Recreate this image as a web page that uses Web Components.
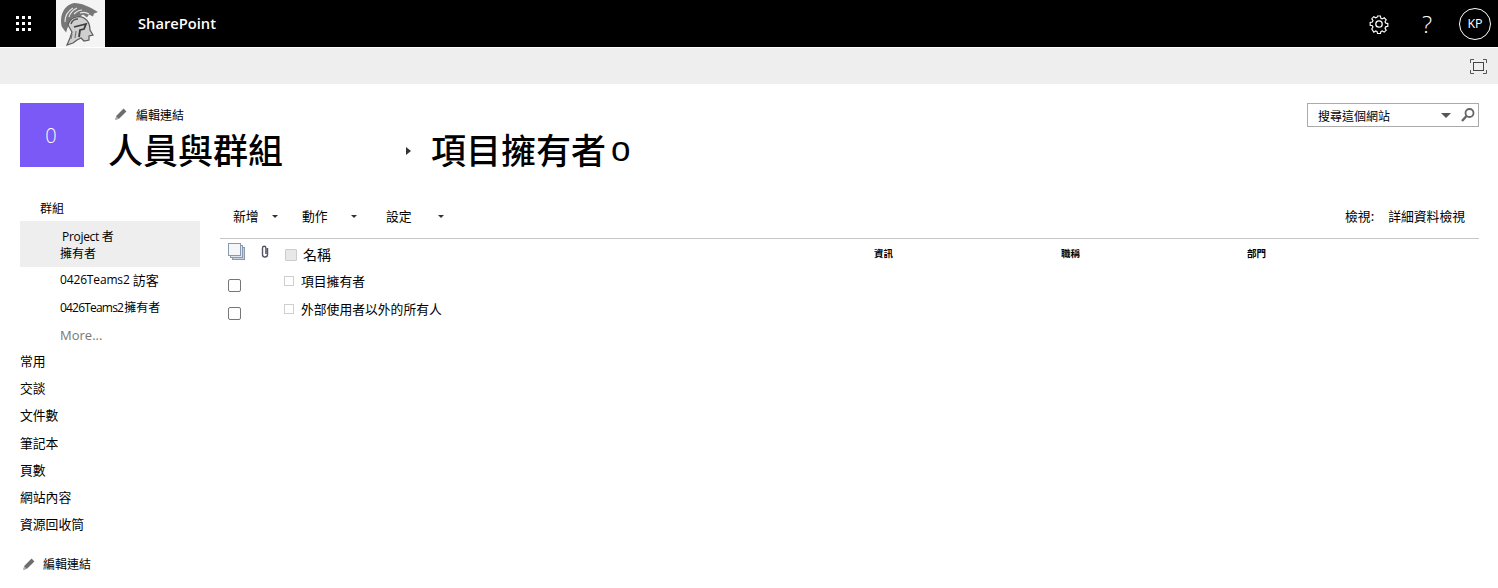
<!DOCTYPE html>
<html lang="zh-Hant">
<head>
<meta charset="utf-8">
<title>人員與群組</title>
<style>
  html, body { margin: 0; padding: 0; background: #fff; }
  body { font-family: "Open Sans", "Noto Sans CJK TC", sans-serif; color: #000; overflow: hidden; height: 588px; }
</style>
</head>
<body>
<sp-suitebar></sp-suitebar>
<sp-ribbon></sp-ribbon>
<sp-title-row></sp-title-row>
<sp-workspace>
  <sp-quicklaunch slot="nav"></sp-quicklaunch>
  <sp-people-list slot="main"></sp-people-list>
</sp-workspace>

<script>
const CJK = '"Noto Sans CJK TC", sans-serif';
const pencil = `<svg width="14" height="14" viewBox="0 0 14 14"><path d="M9.600 1.600 12.400 4.400 5 11.800 1.400 12.800 2.200 9z" fill="#6d6d6d"/><path d="M2.200 9 5 11.800 1.400 12.800z" fill="#a8a8a8"/></svg>`;

class SpSuitebar extends HTMLElement {
  constructor() {
    super();
    this.attachShadow({ mode: 'open' });
    let dots = '';
    for (let y = 0; y < 3; y++) {
      for (let x = 0; x < 3; x++) dots += `<rect x="${x * 6}" y="${y * 6}" width="3" height="3"/>`;
    }
    this.shadowRoot.innerHTML = `
      <style>
        :host { display: flex; align-items: center; height: 47px; background: #000; color: #fff; margin-bottom: 1px; }
        .waffle { width: 47px; height: 47px; display: flex; align-items: center; justify-content: center; flex: none; }
        .logo { width: 49px; height: 47px; background: #f4f4f4; margin-left: 9px; flex: none; }
        .logo svg { display: block; }
        .brand { margin-left: 33px; font: 600 14.700px "Open Sans", sans-serif; flex: 1; padding-bottom: 2px; }
        .btn { width: 48px; height: 47px; display: flex; align-items: center; justify-content: center; flex: none; }
        .me { width: 32px; height: 32px; box-sizing: border-box; border: 1px solid #fff; border-radius: 50%; font: 400 12.500px "Open Sans", sans-serif; display: flex; align-items: center; justify-content: center; margin: 0 7px 0 8px; flex: none; }
      </style>
      <div class="waffle"><svg width="15" height="15" fill="#fff">${dots}</svg></div>
      <div class="logo">
        <svg width="49" height="47" viewBox="0 0 49 47">
          <path d="M6 27C3 16 8 5 18 3c8 0 16 4 24 9l-4 1.500-1 3-4-2-2 3-4-3-3 2c-7-1-11 3-12 10l-2 6z" fill="#777"/>
          <path d="M9 22c0-6 3-11 8-14M13 17c1-4 4-7 8-9M18 14c2-2 5-4 8-4M24 13c3-1 6-1 9 1" fill="none" stroke="#e8e8e8" stroke-width="1.100"/>
          <path d="M12 25c2-8 10-10 16-7 5 3 6 8 6 12l3 5-4 1v4l-5 1-3-3-4 2-4 3-6 2 3-7 2-6z" fill="#cfcfcf" stroke="#5a5a5a" stroke-width="1.200"/>
          <path d="M18 27l12-3-2 5-4 1-1 7" fill="none" stroke="#3c3c3c" stroke-width="1.800"/>
          <path d="M15 24c1-3 4-5 7-5" fill="none" stroke="#555" stroke-width="1.500"/>
          <path d="M16 34l-1 5M20 31l-1 7" stroke="#777" stroke-width="1.200"/>
        </svg>
      </div>
      <div class="brand">SharePoint</div>
      <div class="btn"><svg width="20" height="20" viewBox="0 0 20 20" fill="none" stroke="#fff" stroke-width="1.300"><path d="M8.400 1.800h3.200l.5 2.500 1.500.7 2.200-1.300 2.200 2.300-1.300 2.100.7 1.500 2.400.6v3l-2.400.6-.7 1.500 1.300 2.200-2.200 2.200-2.200-1.300-1.500.7-.5 2.300H8.400l-.5-2.300-1.500-.7-2.200 1.300L2 16.300l1.300-2.200-.7-1.500-2.400-.6V9l2.400-.6.7-1.500L2 4.800 4.200 2.500l2.200 1.300 1.500-.7z" transform="translate(1 .4) scale(.9)"/><circle cx="10" cy="10" r="3.200"/></svg></div>
      <div class="btn"><span style="font:300 24px 'Open Sans',sans-serif">?</span></div>
      <div class="me">KP</div>
    `;
  }
}
customElements.define('sp-suitebar', SpSuitebar);

class SpRibbon extends HTMLElement {
  constructor() {
    super();
    this.attachShadow({ mode: 'open' });
    this.shadowRoot.innerHTML = `
      <style>
        :host { display: flex; justify-content: flex-end; align-items: center; height: 36px; background: #eeeeee; padding-right: 11px; }
      </style>
      <svg width="17" height="15" viewBox="0 0 17 15" fill="none" stroke="#555" stroke-width="1">
        <path d="M.5 4V.5H4M13 .5h3.500V4M16.500 11v3.500H13M4 14.500H.5V11"/>
        <rect x="3.500" y="3.500" width="10" height="8" stroke="#444"/>
      </svg>
    `;
  }
}
customElements.define('sp-ribbon', SpRibbon);

class SpTitleRow extends HTMLElement {
  constructor() {
    super();
    this.attachShadow({ mode: 'open' });
    this.shadowRoot.innerHTML = `
      <style>
        :host { display: flex; height: 113px; padding: 19px 19px 0 20px; box-sizing: border-box; font-family: ${CJK}; }
        .tile { width: 64px; height: 64px; background: #7a59f6; color: #fff; display: flex; align-items: center; justify-content: center; font: 300 20px "Open Sans", sans-serif; flex: none; padding-right: 2px; box-sizing: border-box; }
        .heading { margin-left: 24px; flex: 1; }
        .edit { display: flex; align-items: center; height: 22px; font-size: 12px; margin-left: 6px; gap: 8px; }
        .crumbs { display: flex; align-items: center; height: 44px; margin-top: 2px; font-size: 35px; line-height: 44px; white-space: nowrap; font-weight: 500; }
        .crumbs b { font: 400 35px "Liberation Sans", sans-serif; margin-left: 5px; }
        .arrow { width: 0; height: 0; border-left: 5px solid #333; border-top: 4.500px solid transparent; border-bottom: 4.500px solid transparent; margin: 4px 20px 0 123px; }
        .search { width: 172px; height: 24px; box-sizing: border-box; border: 1px solid #ababab; display: flex; align-items: center; font-size: 12px; padding-left: 10px; flex: none; }
        .search span { flex: 1; padding-top: 1px; }
        .drop { width: 0; height: 0; border-top: 5px solid #555; border-left: 5px solid transparent; border-right: 5px solid transparent; margin-right: 9px; }
        .lens { margin-right: 2px; display: block; }
      </style>
      <div class="tile">0</div>
      <div class="heading">
        <div class="edit">${pencil}<span>編輯連結</span></div>
        <div class="crumbs"><span>人員與群組</span><i class="arrow"></i><span>項目擁有者</span><b>o</b></div>
      </div>
      <div class="search">
        <span>搜尋這個網站</span><i class="drop"></i>
        <svg class="lens" width="16" height="16" viewBox="0 0 16 16" fill="none" stroke="#666"><circle cx="9.500" cy="6" r="4" stroke-width="1.800"/><path d="M6.500 9 2 14" stroke-width="2.400"/></svg>
      </div>
    `;
  }
}
customElements.define('sp-title-row', SpTitleRow);

class SpWorkspace extends HTMLElement {
  constructor() {
    super();
    this.attachShadow({ mode: 'open' });
    this.shadowRoot.innerHTML = `
      <style>
        :host { display: flex; padding-left: 20px; padding-right: 19px; }
        ::slotted([slot=nav]) { width: 180px; flex: none; }
        ::slotted([slot=main]) { flex: 1; margin-left: 20px; }
      </style>
      <slot name="nav"></slot>
      <slot name="main"></slot>
    `;
  }
}
customElements.define('sp-workspace', SpWorkspace);

class SpQuicklaunch extends HTMLElement {
  constructor() {
    super();
    this.attachShadow({ mode: 'open' });
    const top = ['常用', '交談', '文件數', '筆記本', '頁數', '網站內容', '資源回收筒'];
    this.shadowRoot.innerHTML = `
      <style>
        :host { display: block; font-family: "Open Sans", ${CJK}; font-size: 12px; color: #000; }
        .group { height: 25px; box-sizing: border-box; padding: 0 0 2px 20px; margin-top: -1px; display: flex; align-items: center; }
        .selected { background: #eeeeee; height: 46px; box-sizing: border-box; padding: 7px 0 0 40px; line-height: 17px; }
        .selected span { display: block; }
        .selected .first { padding-left: 2px; letter-spacing: -.3px; }
        .sub { height: 27.500px; box-sizing: border-box; padding: 0 0 2px 40px; display: flex; align-items: center; white-space: nowrap; font-size: 13px; }
        .sub span { font-size: 12px; }
        .a span { letter-spacing: -.15px; margin-right: 3px; }
        .b { font-size: 12px; }
        .b span { letter-spacing: -.8px; margin-right: 1px; }
        .more { color: #777; font-size: 13px; }
        .tops { margin-top: -2px; font-size: 12.800px; }
        .top { height: 27.300px; box-sizing: border-box; padding-bottom: 2px; display: flex; align-items: center; }
        .edit { display: flex; align-items: center; gap: 7px; margin-top: 12px; height: 26px; padding-left: 2px; }
      </style>
      <div class="group">群組</div>
      <div class="selected"><span class="first">Project 者</span><span>擁有者</span></div>
      <div class="sub a"><span>0426Teams2</span>訪客</div>
      <div class="sub b"><span>0426Teams2</span>擁有者</div>
      <div class="sub more">More...</div>
      <div class="tops">${top.map(t => `<div class="top">${t}</div>`).join('')}</div>
      <div class="edit">${pencil}<span>編輯連結</span></div>
    `;
  }
}
customElements.define('sp-quicklaunch', SpQuicklaunch);

class SpPeopleList extends HTMLElement {
  constructor() {
    super();
    this.attachShadow({ mode: 'open' });
    const rows = ['項目擁有者', '外部使用者以外的所有人'];
    this.shadowRoot.innerHTML = `
      <style>
        :host { display: block; font-family: ${CJK}; font-size: 12.800px; margin-top: -3px; }
        .toolbar { display: flex; align-items: center; height: 42px; padding: 0 0 2px 13px; border-bottom: 1px solid #c6c6c6; }
        .menu { display: flex; align-items: center; }
        .caret { width: 0; height: 0; border-top: 3px solid #333; border-left: 3px solid transparent; border-right: 3px solid transparent; margin-top: 3px; }
        .views { margin-left: auto; display: flex; gap: 14px; padding-right: 14px; }
        .head { display: grid; grid-template-columns: 33px 32px 589px 187px 186px 1fr; height: 29px; align-items: center; }
        .small { font-size: 9.500px; font-weight: 700; margin-top: -2px; }
        .row { display: grid; grid-template-columns: 64px 1fr; height: 28px; align-items: center; }
        .box { border: 1px solid #767676; border-radius: 2px; margin: 6px 0 0 8px; box-sizing: border-box; width: 13px; height: 13px; background: #fff; }
        .name { display: flex; align-items: center; gap: 7px; margin-top: -2px; }
        .name span { margin-top: -2px; }
        .tick { width: 10px; height: 10px; border: 1px solid #cfcfcf; box-sizing: border-box; flex: none; }
        .headname { display: flex; align-items: center; font-size: 14px; gap: 6px; margin-top: 2px; }
        .headname span { margin-top: -2px; }
        .headtick { width: 12px; height: 12px; background: #e8e8e8; border: 1px solid #ccc; box-sizing: border-box; border-radius: 1px; }
      </style>
      <div class="toolbar">
        <div class="menu" style="width:69px"><span>新增</span><i class="caret" style="margin-left:13px"></i></div>
        <div class="menu" style="width:84px"><span>動作</span><i class="caret" style="margin-left:23px"></i></div>
        <div class="menu"><span>設定</span><i class="caret" style="margin-left:26px"></i></div>
        <div class="views"><span>檢視:</span><span>詳細資料檢視</span></div>
      </div>
      <div class="head">
        <svg width="18" height="18" viewBox="0 0 18 18" style="margin-left:8px;margin-top:-4px"><rect x="4.500" y="4.500" width="12" height="12" fill="#c5cfdd" stroke="#8a9aae"/><rect x="2.500" y="2.500" width="12" height="12" fill="#dfe4ec" stroke="#8a9aae"/><rect x=".5" y=".5" width="12" height="12" fill="#f4f6f9" stroke="#8a9aae"/></svg>
        <svg width="10" height="13" viewBox="0 0 10 13" fill="none" stroke="#556" stroke-width="1.400" style="margin-left:7px;margin-top:-4px"><path d="M7.500 3v6.500a2.500 2.500 0 0 1-5 0V3a1.700 1.700 0 0 1 3.400 0v6"/></svg>
        <div class="headname"><i class="headtick"></i><span>名稱</span></div>
        <span class="small">資訊</span>
        <span class="small">職稱</span>
        <span class="small">部門</span>
      </div>
      ${rows.map(t => `<div class="row"><i class="box"></i><div class="name"><i class="tick"></i><span>${t}</span></div></div>`).join('')}
    `;
  }
}
customElements.define('sp-people-list', SpPeopleList);
</script>
</body>
</html>
